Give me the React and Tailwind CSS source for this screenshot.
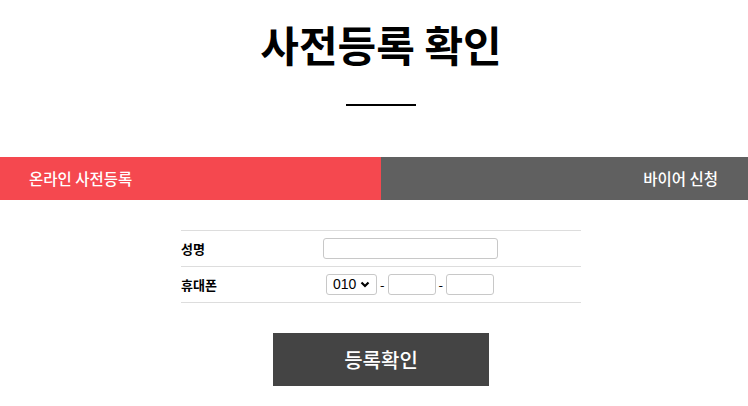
export default function App() {
  return (
    <div className="min-h-screen bg-white text-black overflow-hidden" style={{ fontFamily: '"Noto Sans CJK KR", "Noto Sans", sans-serif' }}>
      <div className="w-[762px]">
        {/* ── Title ── */}
        <div className="flex flex-col items-center pt-[15px]">
          <h1 className="text-[42px] font-bold leading-[58px]">사전등록 확인</h1>
          <div className="mt-[31px] w-[70px] h-[2px] bg-black" />
        </div>

        {/* ── Tabs ── */}
        <div className="mt-[51px] flex h-[43px] text-white text-[15.5px] font-medium">
          <div className="w-1/2 bg-[#f5484f] flex items-center pl-[29px]">온라인 사전등록</div>
          <div className="w-1/2 bg-[#606060] flex items-center justify-end pr-[44px]">바이어 신청</div>
        </div>

        {/* ── Form ── */}
        <div className="mt-[30px] mx-auto w-[400px] border-t border-[#dddddd]">
          <div className="flex items-center h-[36px] border-b border-[#dddddd]">
            <div className="w-[142px] text-[13px] font-bold">성명</div>
            <input className="w-[175px] h-[21px] border border-[#c8c8c8] rounded-[3px]" />
          </div>
          <div className="flex items-center h-[36px] border-b border-[#dddddd]">
            <div className="w-[145px] text-[13px] font-bold">휴대폰</div>
            <div className="flex items-center gap-[3px] text-[13px]">
              <div className="flex items-center justify-between w-[51px] h-[21px] border border-[#c8c8c8] rounded-[3px] px-[6px] text-[14px]" style={{ fontFamily: '"Liberation Sans", sans-serif' }}>
                <span>010</span>
                <svg width="10" height="7" viewBox="0 0 10 7"><path d="M1.5 1.5 L5 5 L8.5 1.5" fill="none" stroke="#000" strokeWidth="2.2" /></svg>
              </div>
              <span>-</span>
              <input className="w-[48px] h-[21px] border border-[#c8c8c8] rounded-[3px]" />
              <span>-</span>
              <input className="w-[48px] h-[21px] border border-[#c8c8c8] rounded-[3px]" />
            </div>
          </div>
        </div>

        {/* ── Submit ── */}
        <div className="mt-[30px] flex justify-center">
          <button className="w-[216px] h-[53px] bg-[#444444] text-white text-[20px] font-medium">등록확인</button>
        </div>
      </div>
    </div>
  );
}
